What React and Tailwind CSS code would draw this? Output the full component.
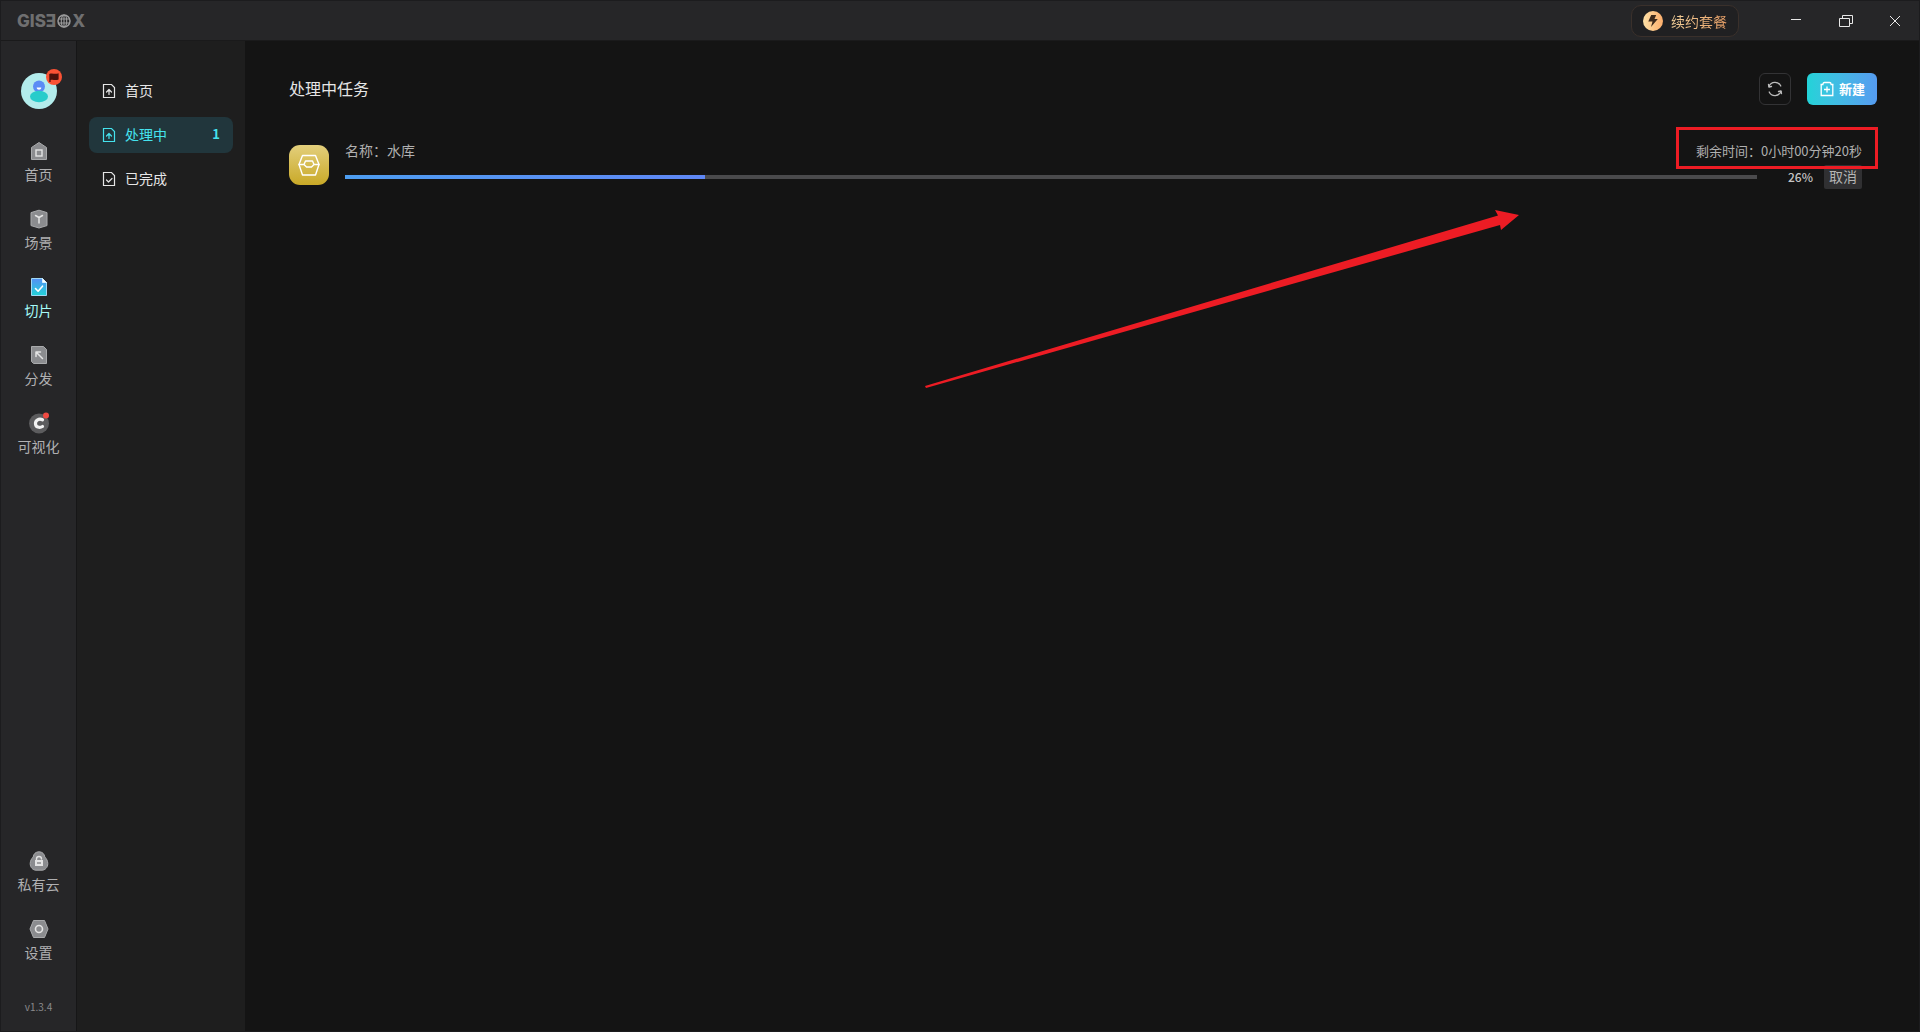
import { useState } from "react";
import clsx from "clsx";

const stroke = { fill: "none", strokeLinecap: "round", strokeLinejoin: "round" };

const HomeIcon = () => (
  <svg className="size-5" viewBox="0 0 20 20">
    <path d="M2.5 6.5 10 1.5l7.5 5v12h-15z" fill="#8b8c8f" stroke="#a9aaac" />
    <rect x="7" y="9" width="6" height="6" fill="#8b8c8f" stroke="#e4e4e4" strokeWidth="1.4" />
  </svg>
);

const SceneIcon = () => (
  <svg className="size-5" viewBox="0 0 20 20">
    <path d="M10 1.2 18 3.6v13L10 19l-8-2.4v-13z" fill="#8b8c8f" stroke="#a9aaac" />
    <path d="M6.5 6.5 10 8.5l3.5-2M10 8.5V14" {...stroke} stroke="#e4e4e4" strokeWidth="1.5" />
  </svg>
);

const SliceIcon = () => (
  <svg className="size-5" viewBox="0 0 20 20">
    <defs>
      <linearGradient id="slice" x1="0" y1="0" x2="0" y2="1">
        <stop offset="0" stopColor="#5590f5" />
        <stop offset="1" stopColor="#22d3d8" />
      </linearGradient>
    </defs>
    <path d="M2.5 1.5h11l4 4v13h-15z" fill="url(#slice)" stroke="#9fd8f5" />
    <path d="M13.5 1.5v4h4z" fill="#fff" stroke="#d9f2ff" />
    <path d="m6.5 11.5 2.6 2.7 4.4-5" {...stroke} stroke="#fff" strokeWidth="1.6" />
  </svg>
);

const PublishIcon = () => (
  <svg className="size-5" viewBox="0 0 20 20">
    <path d="M2.5 1.5h12l3 3v14h-13l-2-2z" fill="#8b8c8f" stroke="#a9aaac" />
    <path d="M7 11.5V7h4.5M7 7l6.5 6.5" {...stroke} stroke="#e4e4e4" strokeWidth="1.5" />
  </svg>
);

const VisualIcon = () => (
  <svg className="size-5 overflow-visible" viewBox="0 0 20 20">
    <circle cx="10" cy="10.5" r="10" fill="#5c5c5e" />
    <path d="M13.5 6.8c-3.500-1.700-7.300.3-7 4 .2 3.300 4 4.500 7 2.700" {...stroke} stroke="#f2f2f2" strokeWidth="3.2" />
    <circle cx="17" cy="2.500" r="3" fill="#f04a42" />
  </svg>
);

const CloudIcon = () => (
  <svg className="size-5" viewBox="0 0 20 20">
    <path d="M10 .8c3.300 0 5.500 2.200 5.800 5.200 1.800 1.700 3 4 3 6.600 0 4-2.800 6.600-5.800 6.600H7c-3 0-5.800-2.600-5.800-6.600 0-2.600 1.200-4.900 3-6.600C4.500 3 6.700.8 10 .8z" fill="#8b8c8f" stroke="#a9aaac" />
    <path d="M7.5 9V8a2.500 2.500 0 0 1 5 0" {...stroke} stroke="#e4e4e4" strokeWidth="1.4" />
    <rect x="6" y="9" width="8" height="6" fill="#e4e4e4" />
    <path d="M8 12h4" stroke="#77787a" strokeWidth="1.2" />
  </svg>
);

const SettingsIcon = () => (
  <svg className="size-5" viewBox="0 0 20 20">
    <path d="M4.5 1.5h11L19 10l-3.500 8.500h-11L1 10z" fill="#8b8c8f" stroke="#a9aaac" />
    <circle cx="10" cy="10" r="3.5" fill="none" stroke="#e4e4e4" strokeWidth="1.6" />
  </svg>
);

const FileIcon = ({ done }) => (
  <svg className="h-4 w-3.5" viewBox="0 0 14 16" {...stroke} stroke="currentColor" strokeWidth="1.2">
    <path d="M1.5 1.500h8l3 3v10h-11z" strokeLinejoin="miter" />
    {done ? <path d="m4.5 9 2 2L10 7.500" /> : <path d="M7 11.500v-5M4.500 9 7 6.500 9.500 9" />}
  </svg>
);

const Avatar = () => (
  <svg className="h-10 w-[42px]" viewBox="0 0 42 40">
    <circle cx="18" cy="22" r="18" fill="#b3ecec" />
    <circle cx="18" cy="17.5" r="6" fill="#5b8cf5" />
    <ellipse cx="18" cy="27.5" rx="9" ry="5.8" fill="#27cccb" />
    <path d="M15.700 18.500h4.600c0 3-4.600 3-4.600 0z" fill="#fff" />
    <circle cx="33" cy="8" r="8" fill="#fb5234" />
    <path d="M28.300 5c3-1.500 5.500.8 9.300-.8v6.300c-3.500 1.500-5.500-.5-8 .5v2h-1.300z" fill="#4b120c" />
  </svg>
);

const Logo = () => (
  <div
    aria-label="GISBOX"
    className="flex items-center font-[Inter] text-[17px] leading-4 font-extrabold text-[#6f6f70]"
  >
    <span>GISƎ</span>
    <svg className="mx-px size-3.5" viewBox="0 0 14 14" fill="none" stroke="#9b9b9c" strokeWidth="1.1">
      <circle cx="7" cy="7" r="6" strokeWidth="1.5" />
      <ellipse cx="7" cy="7" rx="2.7" ry="6" />
      <path d="M7 1v12M1.500 5h11M1.500 9h11" />
    </svg>
    <span>X</span>
  </div>
);

const mainNav = [
  { name: "首页", icon: HomeIcon },
  { name: "场景", icon: SceneIcon },
  { name: "切片", icon: SliceIcon },
  { name: "分发", icon: PublishIcon },
  { name: "可视化", icon: VisualIcon },
];

const bottomNav = [
  { name: "私有云", icon: CloudIcon },
  { name: "设置", icon: SettingsIcon },
];

const NavButton = ({ item, active, onClick }) => {
  const Icon = item.icon;
  return (
    <button
      type="button"
      onClick={onClick}
      className={clsx(
        "flex w-full flex-col items-center gap-[3px] text-sm leading-5",
        active ? "text-[#a5fbf8]" : "text-[#b0b0b2]",
      )}
    >
      <Icon />
      {item.name}
    </button>
  );
};

const TitleBar = () => (
  <header className="flex h-10 shrink-0 items-center justify-between border-b border-[#1a1a1b] bg-[#262628] pl-4">
    <Logo />
    <div className="flex items-center">
      <button
        type="button"
        className="mr-8 flex h-8 items-center gap-2 rounded-[10px] border border-[#3a302b] bg-[#202022] px-[11px] text-sm"
      >
        <svg className="size-5" viewBox="0 0 20 20">
          <defs>
            <linearGradient id="gold">
              <stop offset="0" stopColor="#fde0a6" />
              <stop offset="1" stopColor="#fcae6c" />
            </linearGradient>
          </defs>
          <circle cx="10" cy="10" r="10" fill="url(#gold)" />
          <path d="M8.2 4h5l-1.700 4h3.300L8 16l1.500-5.500H5.300z" fill="#3d2a1c" />
        </svg>
        <span className="bg-linear-to-r from-[#f3d19a] to-[#e99f66] bg-clip-text text-transparent">
          续约套餐
        </span>
      </button>
      <div className="flex text-[#e8e8e8]">
        <button type="button" aria-label="最小化" className="grid h-8 w-[50px] place-items-center">
          <svg className="size-3.5" viewBox="0 0 14 14" stroke="currentColor">
            <path d="M2 5.500h10" />
          </svg>
        </button>
        <button type="button" aria-label="还原" className="grid h-8 w-[50px] place-items-center">
          <svg className="size-3.5" viewBox="0 0 14 14" fill="none" stroke="currentColor">
            <path d="M.5 4.500h10v8H.5zM3.500 4.500v-3h10v8h-3" />
          </svg>
        </button>
        <button type="button" aria-label="关闭" className="grid h-8 w-12 place-items-center">
          <svg className="size-3.5" viewBox="0 0 14 14" stroke="currentColor">
            <path d="m2 2 10 10M12 2 2 12" />
          </svg>
        </button>
      </div>
    </div>
  </header>
);

const Sidebar = () => {
  const [current, setCurrent] = useState("切片");

  return (
    <aside className="flex w-[76px] shrink-0 flex-col items-center border-r border-[#161617] bg-[#262628] pt-7 pb-4">
      <div className="pl-1.5">
        <Avatar />
      </div>
      <nav className="mt-8 flex w-full flex-col gap-[25px]">
        {mainNav.map((item) => (
          <NavButton
            key={item.name}
            item={item}
            active={item.name === current}
            onClick={() => setCurrent(item.name)}
          />
        ))}
      </nav>
      <nav className="mt-auto flex w-full flex-col gap-[25px]">
        {bottomNav.map((item) => (
          <NavButton
            key={item.name}
            item={item}
            active={item.name === current}
            onClick={() => setCurrent(item.name)}
          />
        ))}
      </nav>
      <span className="mt-[37px] text-[10px] leading-4 text-[#8a8a8c]">v1.3.4</span>
    </aside>
  );
};

const TaskMenu = () => {
  const [tab, setTab] = useState("处理中");
  const tabs = [
    { name: "首页" },
    { name: "处理中", count: 1 },
    { name: "已完成", done: true },
  ];

  return (
    <nav className="flex w-[168px] shrink-0 flex-col gap-2 bg-[#1e1e1e] px-3 pt-8">
      {tabs.map((t) => (
        <button
          key={t.name}
          type="button"
          onClick={() => setTab(t.name)}
          className={clsx(
            "flex h-9 items-center gap-[9px] rounded-lg px-[13px] text-sm",
            t.name === tab ? "bg-[#21363c] text-[#45e3ee]" : "text-[#e6e6e6]",
          )}
        >
          <FileIcon done={t.done} />
          <span className="pb-0.5">{t.name}</span>
          {t.count && <span className="ml-auto pb-px text-[13px] font-bold">{t.count}</span>}
        </button>
      ))}
    </nav>
  );
};

const TaskRow = ({ name, percent, remaining }) => (
  <li className="flex items-center gap-4">
    <svg className="size-10 shrink-0" viewBox="0 0 40 40">
      <defs>
        <linearGradient id="task" x1="0" y1="0" x2="0" y2="1">
          <stop offset="0" stopColor="#e3cf7c" />
          <stop offset="1" stopColor="#c9a927" />
        </linearGradient>
      </defs>
      <rect width="40" height="40" rx="11" fill="url(#task)" />
      <g {...stroke} stroke="#fff" strokeWidth="1.4">
        <path d="M13.500 10.500h13l3.500 9-3.500 10.500h-13L10 19.500z" />
        <path d="M10 19.500h5M25 19.500h5M15 19.500l1.500-3.500h7l1.500 3.500-2.500 2.500h-5z" />
      </g>
    </svg>
    <div className="flex flex-1 flex-col gap-1">
      <div className="flex items-start justify-between pr-[15px]">
        <span className="text-sm leading-[18px] text-[#b0b0b0]">名称：{name}</span>
        <span className="relative text-[13px] leading-5 text-[#b0b0b0]">
          {remaining}
          {/* highlight frame */}
          <span className="absolute -top-3.5 -right-4 -left-5 z-10 h-[42px] border-3 border-[#ed1c24]" />
        </span>
      </div>
      <div className="flex h-6 items-center pr-[15px]">
        <div className="h-1 flex-1 bg-[#4a4a4c]">
          <div
            className="h-full bg-linear-to-r from-[#4d9df0] to-[#5f87f5]"
            style={{ width: `${percent}%` }}
          />
        </div>
        <span className="w-14 text-right text-xs font-medium text-[#c4c4c4]">
          {Math.ceil(percent)}%
        </span>
        <button
          type="button"
          className="ml-[11px] h-6 rounded-xs bg-[#303032] px-[5px] pb-0.5 text-sm leading-[22px] text-[#b4b4b4]"
        >
          取消
        </button>
      </div>
    </div>
  </li>
);

const App = () => {
  return (
    <div className="relative flex min-h-screen flex-col border border-[#1c1c1e] bg-[#141414] font-['Noto_Sans_CJK_SC',sans-serif]">
      <TitleBar />
      <div className="flex flex-1">
        <Sidebar />
        <TaskMenu />
        <main className="min-w-0 flex-1 pt-8 pr-[42px] pl-11">
          <div className="flex items-center justify-between">
            <h1 className="pb-0.5 text-base text-[#e6e6e6]">处理中任务</h1>
            <div className="flex gap-4">
              <button
                type="button"
                aria-label="刷新"
                className="grid size-8 place-items-center rounded-md border border-[#333335] text-[#bdbdbd]"
              >
                <svg className="size-4" viewBox="0 0 16 16" {...stroke} stroke="currentColor" strokeWidth="1.3">
                  <path d="M2 5.500A6.500 6.500 0 0 1 13.800 5M14 10.500A6.500 6.500 0 0 1 2.200 11" />
                  <path d="M1.500 3.500 2 6l2.500-.5M14.500 12.500 14 10l-2.500.5" />
                </svg>
              </button>
              <button
                type="button"
                className="flex h-8 items-center gap-1 rounded-md bg-linear-to-r from-[#22d3d8] to-[#559bf0] px-3 text-[13px] font-bold text-white"
              >
                <svg className="size-4" viewBox="0 0 16 16" fill="none" stroke="currentColor" strokeWidth="1.3">
                  <path d="M4 3.500V3q0-1.500 1.500-1.500h5Q12 1.500 12 3v.5M1.500 3.500h3M11.500 3.500h3M2.200 3.500v11h11.600v-11M8 5.500v6M5 8.500h6" />
                </svg>
                新建
              </button>
            </div>
          </div>
          <ul className="mt-9">
            <TaskRow name="水库" percent={25.5} remaining="剩余时间：0小时00分钟20秒" />
          </ul>
        </main>
      </div>

      {/* pointer arrow drawn over the page */}
      <svg
        className="pointer-events-none absolute top-[208px] left-[924px] h-[180px] w-[594px]"
        viewBox="0 0 594 180"
        fill="#ed1c24"
      >
        <path d="M0 177 573 6.500 570 1l24 5-18 15-1-5L1 179z" />
      </svg>
    </div>
  );
};

export default App;
